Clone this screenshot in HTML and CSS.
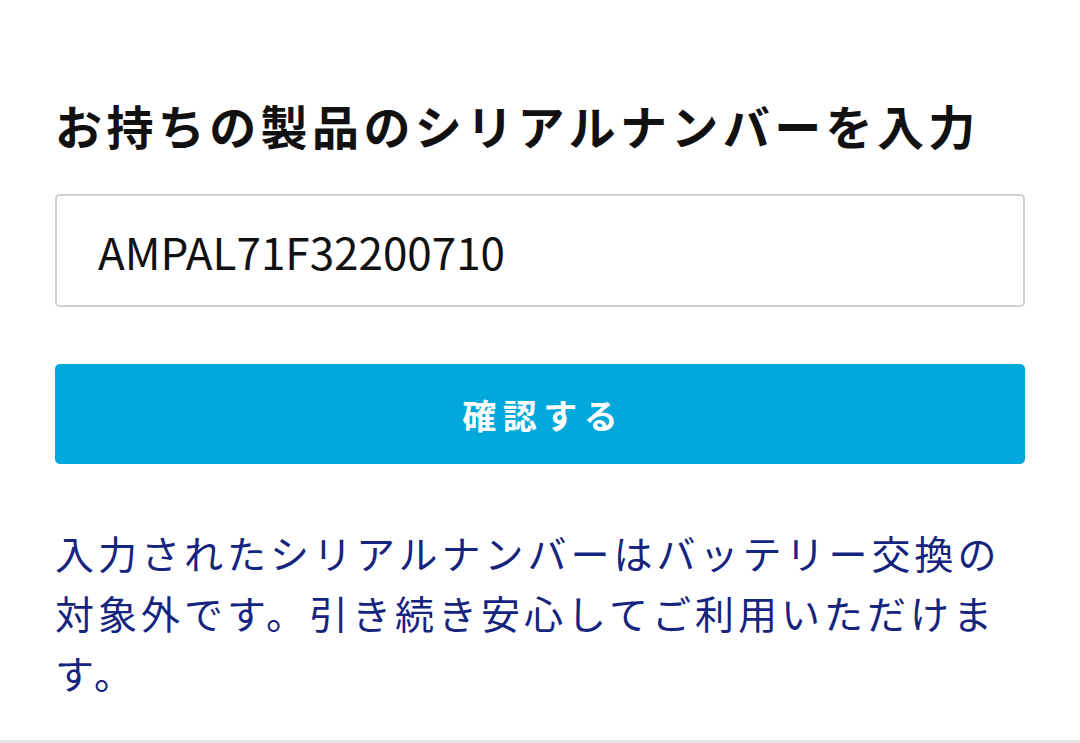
FILE: index.html
```html
<!DOCTYPE html>
<html lang="ja">
<head>
<meta charset="utf-8">
<title>シリアルナンバー確認</title>
<link rel="stylesheet" href="styles.css">
</head>
<body>
<main class="page">
  <h1 class="title">お持ちの製品のシリアルナンバーを入力</h1>
  <div class="field">AMPAL71F32200710</div>
  <button class="submit" type="button">確認する</button>
  <p class="note">入力されたシリアルナンバーはバッテリー交換の対象外です。引き続き安心してご利用いただけます。</p>
</main>
<div class="bottom-rule"></div>
</body>
</html>
```

FILE: styles.css
```css
html, body {
  margin: 0;
  padding: 0;
  background: #ffffff;
}
body {
  width: 1080px;
  height: 743px;
  overflow: hidden;
  display: flex;
  flex-direction: column;
  font-family: "Noto Sans CJK JP", "Noto Sans", sans-serif;
}
.page {
  flex: 1;
  padding: 95px 55px 0 55px;
  display: flex;
  flex-direction: column;
}
.title {
  margin: 0;
  font-size: 47px;
  line-height: 60px;
  font-weight: 700;
  letter-spacing: 4.4px;
  color: #111111;
  white-space: nowrap;
}
.field {
  margin-top: 39px;
  height: 113px;
  box-sizing: border-box;
  border: 2px solid #cfcfcf;
  border-radius: 5px;
  padding-left: 41px;
  display: flex;
  align-items: center;
  font-size: 44px;
  color: #111111;
}
.submit {
  margin-top: 57px;
  height: 100px;
  border: none;
  border-radius: 5px;
  background: #01a8dc;
  color: #ffffff;
  font-family: "Noto Sans CJK JP", "Noto Sans", sans-serif;
  font-size: 34px;
  font-weight: 700;
  letter-spacing: 6.5px;
  padding: 0 0 0 6.5px;
}
.note {
  margin: 58px 0 0 0;
  font-size: 39px;
  line-height: 60px;
  letter-spacing: 4px;
  font-weight: 400;
  color: #15247e;
}
.bottom-rule {
  height: 3px;
  background: #e6e6e6;
}
```
